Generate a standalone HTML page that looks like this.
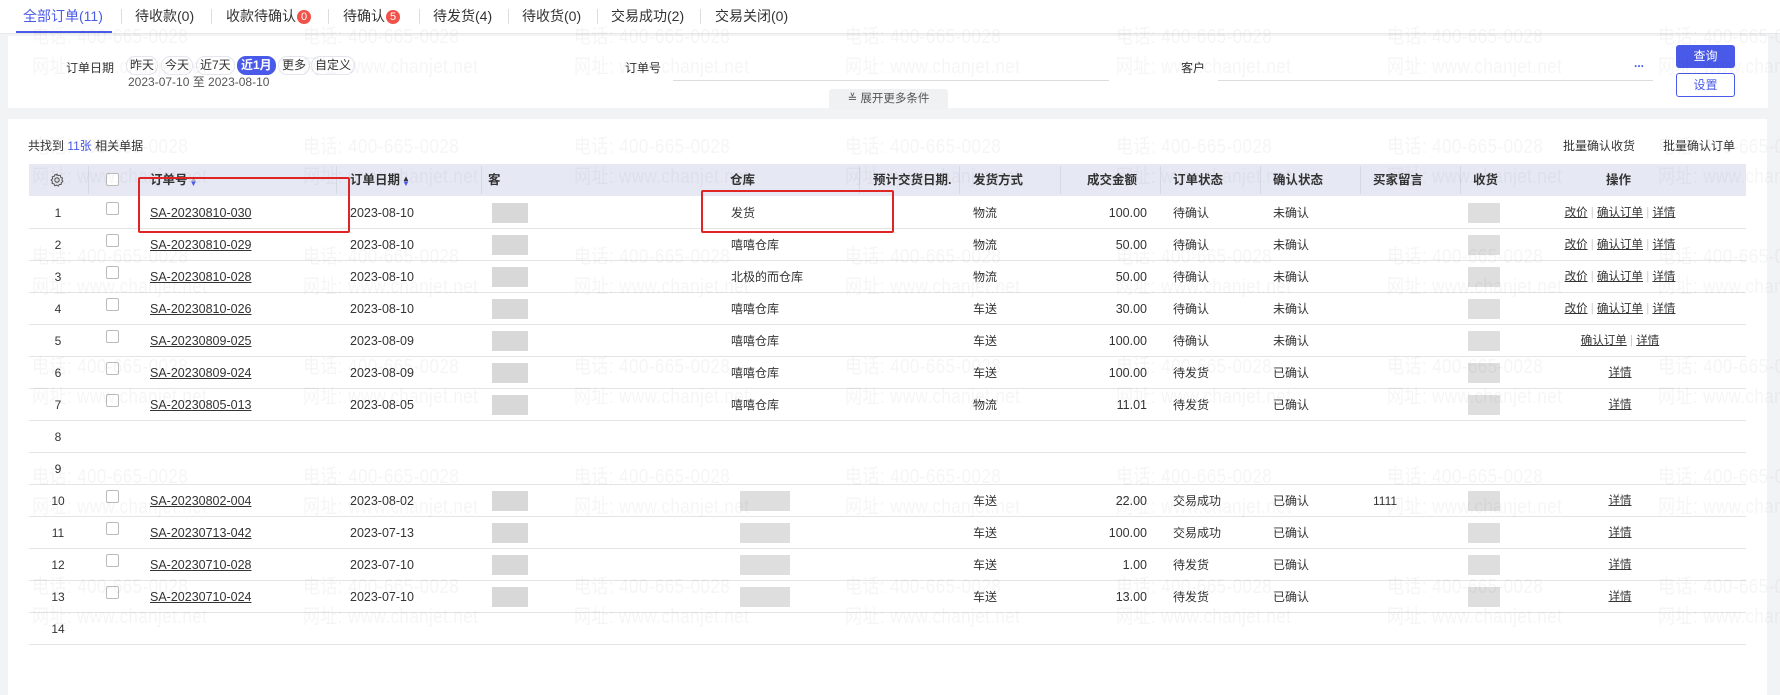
<!DOCTYPE html>
<html><head><meta charset="utf-8">
<style>
*{box-sizing:border-box;margin:0;padding:0}
html,body{width:1780px;height:695px;overflow:hidden}
body{background:#f2f3f5;font-family:"Liberation Sans","Noto Sans CJK SC",sans-serif;font-size:12px;color:#333;position:relative}
.a{position:absolute;white-space:nowrap}
.tab{position:absolute;top:7px;font-size:14px;color:#333;line-height:18px}
.sep{position:absolute;top:9px;width:1px;height:15px;background:#ddd}
.badge{display:inline-block;width:14px;height:14px;border-radius:7px;background:#f0524a;color:#fff;font-size:11px;line-height:14px;text-align:center;vertical-align:1px;margin-left:1px}
.chip{position:absolute;top:56px;height:19px;line-height:17px;border:1px solid #e3e6ee;border-radius:9px;padding:0 3px;font-size:12px;color:#333}
.hd{position:absolute;top:164px;height:32px;line-height:32px;font-weight:bold;font-size:12.5px;color:#333}
.vs{position:absolute;top:166px;width:1px;height:28px;background:#d5d9e4}
.rl{position:absolute;left:29px;width:1717px;height:1px;background:#e4e4e4}
.c{position:absolute;line-height:16px}
.lk{text-decoration:underline;color:#333}
.cb{position:absolute;width:13px;height:13px;border:1px solid #bbb;border-radius:2px;background:#fff}
.bl{position:absolute;background:#c8c8c8}
.wm{position:absolute;font-size:20px;color:rgba(0,0,0,0.04);white-space:nowrap;pointer-events:none;transform:scaleX(0.85);transform-origin:0 0;letter-spacing:0.5px}
.ar{display:inline-block;vertical-align:middle;line-height:5px;font-size:8px;margin-left:2px}
#wrap{position:absolute;left:0;top:0;width:1780px;height:695px;overflow:hidden}
</style></head><body><div id="wrap">
<div class="a" style="left:0;top:0;width:1780px;height:34px;background:#fff;border-bottom:1px solid #e8e8e8"></div>
<div class="tab" style="left:23px;color:#4a5ae8">全部订单(11)</div>
<div class="a" style="left:16px;top:31px;width:96px;height:2px;background:#4a5ae8"></div>
<div class="sep" style="left:121px"></div><div class="tab" style="left:135px">待收款(0)</div>
<div class="sep" style="left:211px"></div><div class="tab" style="left:226px">收款待确认<span class="badge">0</span></div>
<div class="sep" style="left:328px"></div><div class="tab" style="left:343px">待确认<span class="badge">5</span></div>
<div class="sep" style="left:419px"></div><div class="tab" style="left:433px">待发货(4)</div>
<div class="sep" style="left:508px"></div><div class="tab" style="left:522px">待收货(0)</div>
<div class="sep" style="left:597px"></div><div class="tab" style="left:611px">交易成功(2)</div>
<div class="sep" style="left:700px"></div><div class="tab" style="left:715px">交易关闭(0)</div>

<div class="a" style="left:8px;top:36px;width:1760px;height:72px;background:#fff"></div>
<div class="a" style="left:66px;top:59px">订单日期</div>
<div class="chip" style="left:126px">昨天</div>
<div class="chip" style="left:161px">今天</div>
<div class="chip" style="left:196px">近7天</div>
<div class="chip" style="left:237px;background:#4a5ae8;border-color:#4a5ae8;color:#fff;font-weight:bold">近1月</div>
<div class="chip" style="left:278px">更多</div>
<div class="chip" style="left:311px">自定义</div>
<div class="a" style="left:128px;top:73px;color:#555">2023-07-10 至 2023-08-10</div>
<div class="a" style="left:625px;top:59px">订单号</div>
<div class="a" style="left:673px;top:80px;width:436px;height:1px;background:#dcdcdc"></div>
<div class="a" style="left:1181px;top:59px">客户</div>
<div class="a" style="left:1218px;top:80px;width:435px;height:1px;background:#dcdcdc"></div>
<div class="a" style="left:1634px;top:56px;color:#4a5ae8;font-weight:bold">...</div>
<div class="a" style="left:1676px;top:45px;width:59px;height:23px;background:#4a5ae8;border-radius:3px;color:#fff;text-align:center;line-height:23px">查询</div>
<div class="a" style="left:1676px;top:73px;width:59px;height:24px;border:1px solid #4a5ae8;border-radius:3px;color:#4a5ae8;text-align:center;line-height:22px;background:#fff">设置</div>
<div class="a" style="left:829px;top:89px;width:119px;height:20px;background:#f0f1f3;border-radius:3px 3px 0 0;text-align:center;line-height:20px;color:#555;font-size:11.5px">≚ 展开更多条件</div>

<div class="a" style="left:8px;top:119px;width:1759px;height:576px;background:#fff"></div>
<div class="a" style="left:28px;top:137px">共找到 <span style="color:#4a5ae8">11张</span> 相关单据</div>
<div class="a" style="left:1563px;top:137px">批量确认收货</div>
<div class="a" style="left:1663px;top:137px">批量确认订单</div>

<div class="a" style="left:29px;top:164px;width:1717px;height:32px;background:#e6e9f4"></div>
<svg class="a" style="left:50px;top:173px" width="14" height="14" viewBox="0 0 14 14"><circle cx="7" cy="7" r="2.2" fill="none" stroke="#555" stroke-width="1.1"/><path d="M7 1.2l1.3 1.4 1.9-.3.5 1.9 1.8.8-.6 1.8 1 1.6-1.6 1.1-.1 1.9-1.9.1-1.1 1.6-1.6-1-1.8.6-.8-1.8-1.9-.5.3-1.9L1.2 7l1.4-1.3-.3-1.9 1.9-.5.8-1.8 1.8.6z" fill="none" stroke="#555" stroke-width="1"/></svg>
<div class="vs" style="left:88px"></div>
<div class="cb" style="left:106px;top:173px"></div>
<div class="hd" style="left:150px">订单号<span class="ar"><span style="color:#bbb">▲</span><br><span style="color:#4a5ae8">▼</span></span></div>
<div class="vs" style="left:336px"></div>
<div class="hd" style="left:350px">订单日期<span class="ar"><span style="color:#333">▲</span><br><span style="color:#4a5ae8">▼</span></span></div>
<div class="vs" style="left:481px"></div>
<div class="hd" style="left:488px">客</div>
<div class="hd" style="left:730px">仓库</div>
<div class="vs" style="left:859px"></div>
<div class="hd" style="left:873px">预计交货日期.</div>
<div class="vs" style="left:959px"></div>
<div class="hd" style="left:973px">发货方式</div>
<div class="vs" style="left:1060px"></div>
<div class="hd" style="left:1087px">成交金额</div>
<div class="vs" style="left:1160px"></div>
<div class="hd" style="left:1173px">订单状态</div>
<div class="vs" style="left:1260px"></div>
<div class="hd" style="left:1273px">确认状态</div>
<div class="vs" style="left:1360px"></div>
<div class="hd" style="left:1373px">买家留言</div>
<div class="vs" style="left:1460px"></div>
<div class="hd" style="left:1473px">收货</div>
<div class="hd" style="left:1606px">操作</div>

<div id="rows"></div>
<div class="a" style="left:138px;top:177px;width:212px;height:56px;border:2.5px solid #e02424;border-radius:2px"></div>
<div class="a" style="left:701px;top:190px;width:193px;height:43px;border:2.5px solid #e02424;border-radius:2px"></div>
</div>
<script>
var R=[
["SA-20230810-030","2023-08-10","发货","物流","100.00","待确认","未确认","",3],
["SA-20230810-029","2023-08-10","嘻嘻仓库","物流","50.00","待确认","未确认","",3],
["SA-20230810-028","2023-08-10","北极的而仓库","物流","50.00","待确认","未确认","",3],
["SA-20230810-026","2023-08-10","嘻嘻仓库","车送","30.00","待确认","未确认","",3],
["SA-20230809-025","2023-08-09","嘻嘻仓库","车送","100.00","待确认","未确认","",2],
["SA-20230809-024","2023-08-09","嘻嘻仓库","车送","100.00","待发货","已确认","",1],
["SA-20230805-013","2023-08-05","嘻嘻仓库","物流","11.01","待发货","已确认","",1],
null,null,
["SA-20230802-004","2023-08-02","","车送","22.00","交易成功","已确认","1111",1],
["SA-20230713-042","2023-07-13","","车送","100.00","交易成功","已确认","",1],
["SA-20230710-028","2023-07-10","","车送","1.00","待发货","已确认","",1],
["SA-20230710-024","2023-07-10","","车送","13.00","待发货","已确认","",1]];
var h="";
for(var i=0;i<14;i++){
 var cy=213+32*i, t=cy-8, r=R[i];
 h+='<div class="rl" style="top:'+(cy+15)+'px"></div>';
 h+='<div class="c" style="left:50px;width:16px;text-align:center;top:'+t+'px">'+(i+1)+'</div>';
 if(!r) continue;
 h+='<div class="cb" style="left:106px;top:'+(t-3)+'px"></div>';
 h+='<div class="c lk" style="left:150px;top:'+t+'px;font-size:12.5px">'+r[0]+'</div>';
 h+='<div class="c" style="left:350px;top:'+t+'px;font-size:12.5px">'+r[1]+'</div>';
 h+='<div class="bl" style="left:492px;top:'+(t-2)+'px;width:36px;height:20px;opacity:.7"></div>';
 if(r[2]) h+='<div class="c" style="left:731px;top:'+t+'px">'+r[2]+'</div>';
 else h+='<div class="bl" style="left:740px;top:'+(t-2)+'px;width:50px;height:20px;opacity:.6"></div>';
 h+='<div class="c" style="left:973px;top:'+t+'px">'+r[3]+'</div>';
 h+='<div class="c" style="left:1060px;width:87px;text-align:right;top:'+t+'px;font-size:12.5px">'+r[4]+'</div>';
 h+='<div class="c" style="left:1173px;top:'+t+'px">'+r[5]+'</div>';
 h+='<div class="c" style="left:1273px;top:'+t+'px">'+r[6]+'</div>';
 if(r[7]) h+='<div class="c" style="left:1373px;top:'+t+'px">'+r[7]+'</div>';
 h+='<div class="bl" style="left:1468px;top:'+(t-2)+'px;width:32px;height:20px;opacity:.6"></div>';
 var op=r[8]==3?'<span class="lk">改价</span> <span style="color:#ccc">|</span> <span class="lk">确认订单</span> <span style="color:#ccc">|</span> <span class="lk">详情</span>':r[8]==2?'<span class="lk">确认订单</span> <span style="color:#ccc">|</span> <span class="lk">详情</span>':'<span class="lk">详情</span>';
 h+='<div class="c" style="left:1520px;width:200px;text-align:center;top:'+t+'px;font-size:11.5px">'+op+'</div>';
}
for(var y=0;y<6;y++)for(var x=0;x<7;x++){
 var wx=32+271*x, wy=20+110*y;
 if(wy+30<680){
 h+='<div class="wm" style="left:'+wx+'px;top:'+wy+'px">电话: 400-665-0028</div>';
 h+='<div class="wm" style="left:'+wx+'px;top:'+(wy+30)+'px">网址: www.chanjet.net</div>';}
}
document.getElementById("rows").innerHTML=h;
</script>
</body></html>
